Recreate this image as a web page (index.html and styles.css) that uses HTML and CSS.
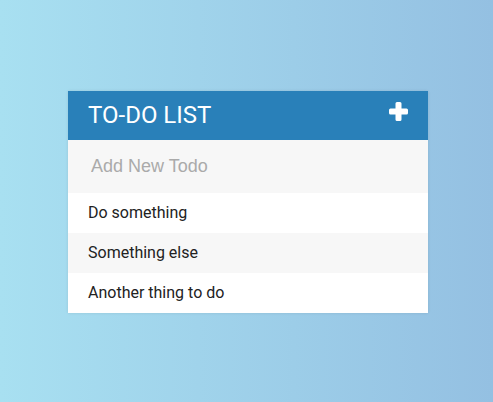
FILE: index.html
```html
<!DOCTYPE html>
<html>
<head>
<meta charset="utf-8">
<link rel="stylesheet" href="styles.css">
</head>
<body>
<div class="container">
  <h1 class="title">To-Do List
    <svg class="plus" width="19" height="19" viewBox="0 0 19 19"><path d="M6.5 1.5 Q6.5 0 8 0 H11 Q12.5 0 12.5 1.5 V6.5 H17.5 Q19 6.5 19 8 V11 Q19 12.5 17.5 12.5 H12.5 V17.5 Q12.5 19 11 19 H8 Q6.5 19 6.5 17.5 V12.5 H1.5 Q0 12.5 0 11 V8 Q0 6.5 1.5 6.5 H6.5 Z" fill="#fff"/></svg>
  </h1>
  <input class="new-todo" type="text" placeholder="Add New Todo">
  <ul class="list">
    <li class="item">Do something</li>
    <li class="item">Something else</li>
    <li class="item">Another thing to do</li>
  </ul>
</div>
</body>
</html>
```
FILE: styles.css
```css
html, body {
  margin: 0;
  padding: 0;
  height: 100%;
}
body {
  box-sizing: border-box;
  padding: 91px 0 0 3px;
  background: linear-gradient(to right, #a8e0f1, #94c0e2);
  font-family: Roboto, "Liberation Sans", sans-serif;
}
.container {
  width: 360px;
  margin: 0 auto;
  background: #f7f7f7;
  box-shadow: 0 0 3px rgba(0,0,0,0.1);
}
.title {
  margin: 0;
  background: #2980b9;
  color: #fff;
  padding: 10px 20px;
  height: 29px;
  font-size: 24px;
  line-height: 29px;
  font-weight: normal;
  text-transform: uppercase;
  display: flex;
  justify-content: space-between;
  align-items: center;
}
.plus {
  display: block;
  margin-right: 0;
  margin-bottom: 9px;
}
.new-todo {
  display: block;
  box-sizing: border-box;
  width: 100%;
  height: 53px;
  margin: 0;
  padding: 13px 13px 13px 20px;
  border: 3px solid transparent;
  background: #f7f7f7;
  font-family: "Liberation Sans", Arial, sans-serif;
  font-size: 18px;
  color: #2980b9;
  outline: none;
}
.new-todo::placeholder {
  color: #aaa;
}
.list {
  list-style: none;
  margin: 0;
  padding: 0;
}
.item {
  background: #fff;
  height: 40px;
  line-height: 40px;
  padding-left: 20px;
  font-size: 16px;
  color: #222;
}
.item:nth-child(2n) {
  background: #f7f7f7;
}
```
